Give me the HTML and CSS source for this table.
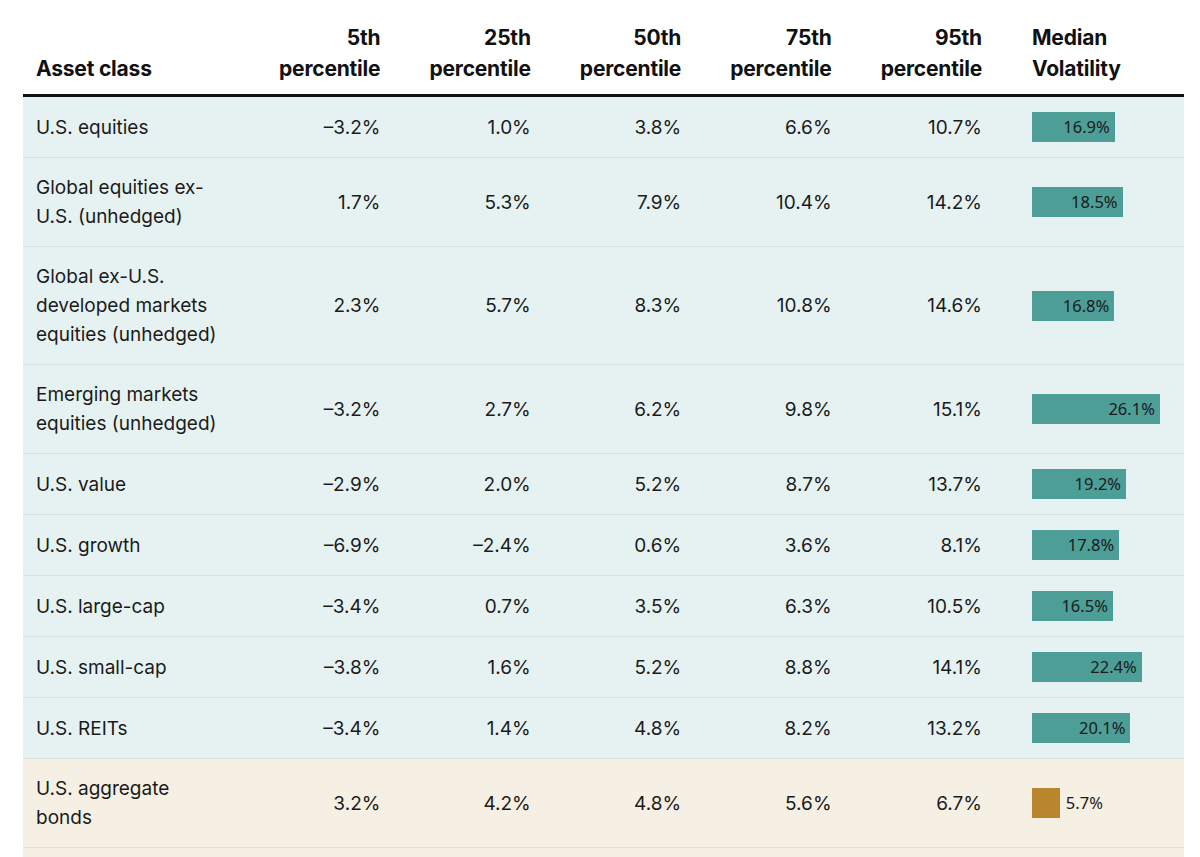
FILE: index.html
```html
<!DOCTYPE html>
<html lang="en">
<head>
<meta charset="utf-8">
<title>Asset class return percentiles</title>
<link rel="stylesheet" href="styles.css">
</head>
<body>
<div class="wrap">
<table class="dist">
  <colgroup>
    <col class="c-name">
    <col class="c-num"><col class="c-num"><col class="c-num"><col class="c-num"><col class="c-num">
    <col class="c-vol">
  </colgroup>
  <thead>
    <tr>
      <th class="name">Asset class</th>
      <th class="num">5th<br>percentile</th>
      <th class="num">25th<br>percentile</th>
      <th class="num">50th<br>percentile</th>
      <th class="num">75th<br>percentile</th>
      <th class="num">95th<br>percentile</th>
      <th class="vol">Median<br>Volatility</th>
    </tr>
  </thead>
  <tbody>
    <tr class="eq">
      <td class="name">U.S. equities</td>
      <td class="num">–3.2%</td><td class="num">1.0%</td><td class="num">3.8%</td><td class="num">6.6%</td><td class="num">10.7%</td>
      <td class="vol"><div class="cell"><div class="bar" style="width:82.8px"><span>16.9%</span></div></div></td>
    </tr>
    <tr class="eq">
      <td class="name">Global equities ex-<br>U.S. (unhedged)</td>
      <td class="num">1.7%</td><td class="num">5.3%</td><td class="num">7.9%</td><td class="num">10.4%</td><td class="num">14.2%</td>
      <td class="vol"><div class="cell"><div class="bar" style="width:90.6px"><span>18.5%</span></div></div></td>
    </tr>
    <tr class="eq">
      <td class="name">Global ex-U.S.<br>developed markets<br>equities (unhedged)</td>
      <td class="num">2.3%</td><td class="num">5.7%</td><td class="num">8.3%</td><td class="num">10.8%</td><td class="num">14.6%</td>
      <td class="vol"><div class="cell"><div class="bar" style="width:82.3px"><span>16.8%</span></div></div></td>
    </tr>
    <tr class="eq">
      <td class="name">Emerging markets<br>equities (unhedged)</td>
      <td class="num">–3.2%</td><td class="num">2.7%</td><td class="num">6.2%</td><td class="num">9.8%</td><td class="num">15.1%</td>
      <td class="vol"><div class="cell"><div class="bar" style="width:127.9px"><span>26.1%</span></div></div></td>
    </tr>
    <tr class="eq">
      <td class="name">U.S. value</td>
      <td class="num">–2.9%</td><td class="num">2.0%</td><td class="num">5.2%</td><td class="num">8.7%</td><td class="num">13.7%</td>
      <td class="vol"><div class="cell"><div class="bar" style="width:94.1px"><span>19.2%</span></div></div></td>
    </tr>
    <tr class="eq">
      <td class="name">U.S. growth</td>
      <td class="num">–6.9%</td><td class="num">–2.4%</td><td class="num">0.6%</td><td class="num">3.6%</td><td class="num">8.1%</td>
      <td class="vol"><div class="cell"><div class="bar" style="width:87.2px"><span>17.8%</span></div></div></td>
    </tr>
    <tr class="eq">
      <td class="name">U.S. large-cap</td>
      <td class="num">–3.4%</td><td class="num">0.7%</td><td class="num">3.5%</td><td class="num">6.3%</td><td class="num">10.5%</td>
      <td class="vol"><div class="cell"><div class="bar" style="width:80.9px"><span>16.5%</span></div></div></td>
    </tr>
    <tr class="eq">
      <td class="name">U.S. small-cap</td>
      <td class="num">–3.8%</td><td class="num">1.6%</td><td class="num">5.2%</td><td class="num">8.8%</td><td class="num">14.1%</td>
      <td class="vol"><div class="cell"><div class="bar" style="width:109.8px"><span>22.4%</span></div></div></td>
    </tr>
    <tr class="eq">
      <td class="name">U.S. REITs</td>
      <td class="num">–3.4%</td><td class="num">1.4%</td><td class="num">4.8%</td><td class="num">8.2%</td><td class="num">13.2%</td>
      <td class="vol"><div class="cell"><div class="bar" style="width:98.5px"><span>20.1%</span></div></div></td>
    </tr>
    <tr class="bd">
      <td class="name">U.S. aggregate<br>bonds</td>
      <td class="num">3.2%</td><td class="num">4.2%</td><td class="num">4.8%</td><td class="num">5.6%</td><td class="num">6.7%</td>
      <td class="vol"><div class="cell"><div class="bar small" style="width:27.9px"></div><span class="out">5.7%</span></div></td>
    </tr>
    <tr class="bd spacer">
      <td class="name"></td>
      <td class="num"></td><td class="num"></td><td class="num"></td><td class="num"></td><td class="num"></td>
      <td class="vol"></td>
    </tr>
  </tbody>
</table>
</div>
</body>
</html>
```

FILE: styles.css
```css
html, body {
  margin: 0;
  padding: 0;
  background: #ffffff;
}

.wrap {
  padding: 0 16px 0 23px;
}

.dist {
  width: 1161px;
  border-collapse: collapse;
  table-layout: fixed;
  font-family: "Inter", "Liberation Sans", sans-serif;
  color: #1b1b1b;
}

.c-name { width: 232px; }
.c-num { width: 150.4px; }
.c-vol { width: 177px; }

.dist th {
  font-weight: 700;
  font-size: 21px;
  line-height: 31px;
  letter-spacing: -0.2px;
  color: #111;
  vertical-align: bottom;
  padding: 22px 0 10px 0;
  border-bottom: 3px solid #111;
}

.dist th.name { text-align: left; padding-left: 13px; }
.dist th.num { text-align: right; padding-right: 25px; }
.dist th.vol { text-align: left; padding-left: 25px; }

.dist td {
  font-size: 19px;
  line-height: 29px;
  padding: 15px 0;
  vertical-align: middle;
  border-bottom: 1px solid #d2e3e3;
}

.dist td.name { padding-left: 13px; }
.dist td.num { text-align: right; padding-right: 25px; }
.dist td.vol { padding-left: 25px; }

.eq td { background: #e6f2f2; }
.bd td { background: #f6efe3; border-bottom-color: #e6dccb; }

.spacer td { height: 60px; }

.cell {
  display: flex;
  align-items: center;
  height: 30px;
}

.bar {
  display: flex;
  flex: none;
  justify-content: flex-end;
  align-items: center;
  height: 30px;
  background: #4c9e97;
  box-sizing: border-box;
  padding-right: 5px;
}

.bar span,
.out {
  font-family: "Noto Sans", "Open Sans", sans-serif;
  font-size: 16.5px;
  line-height: 20px;
  color: #1b1b1b;
  white-space: nowrap;
}

.bar.small {
  background: #b9862e;
  padding: 0;
}

.out {
  margin-left: 6px;
}
```
